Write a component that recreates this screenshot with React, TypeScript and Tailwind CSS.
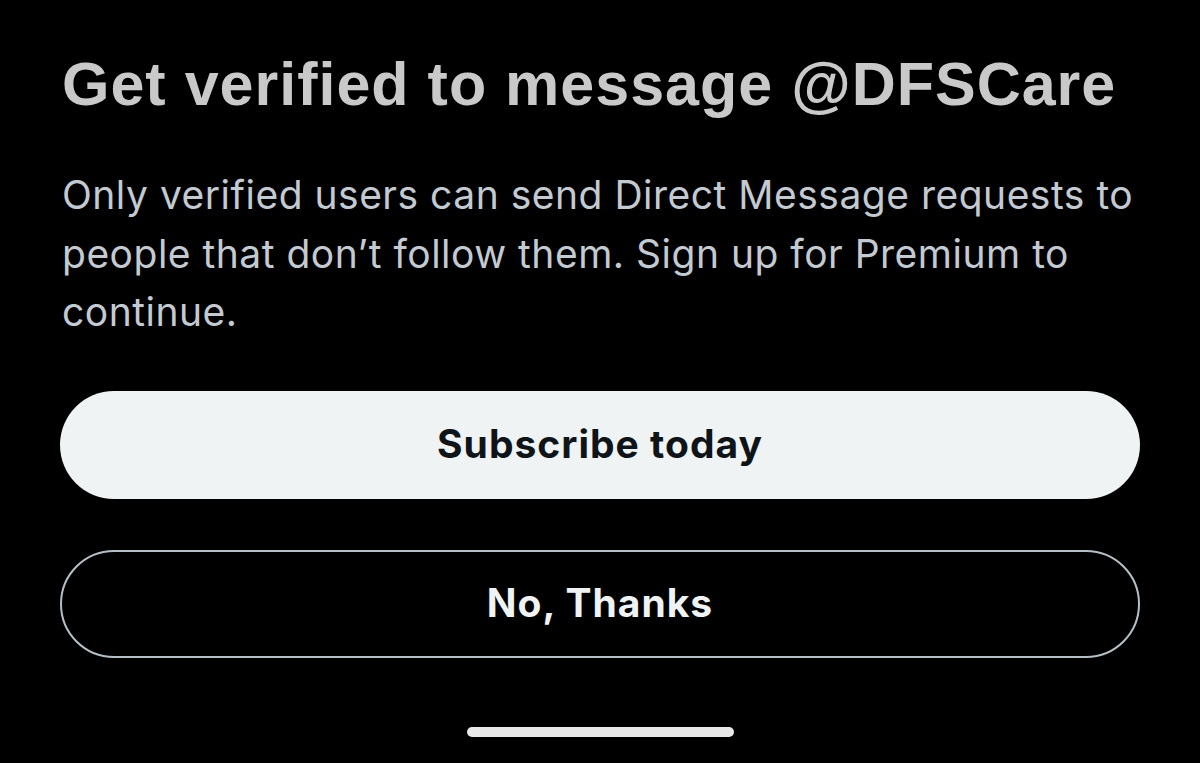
import React from 'react';

export default function App() {
  return (
    <div className="w-[1200px] h-[763px] bg-black overflow-hidden flex flex-col px-[60px]">
      <h1 className="mt-[50px] pl-[2px] text-[61px] leading-[69px] tracking-[1px] font-bold text-[#c9c9c9] font-['Liberation_Sans',sans-serif] whitespace-nowrap">
        Get verified to message @DFSCare
      </h1>

      <p className="mt-[47px] pl-[2px] text-[39px] leading-[58.5px] tracking-[0.5px] text-[#c3cad1] font-['Inter',sans-serif]">
        Only verified users can send Direct Message requests to people that don’t follow them. Sign up for Premium to
        continue.
      </p>

      <div className="mt-[49px] flex flex-col gap-[51px]">
        <button className="h-[108px] w-full rounded-full bg-[#eff3f4] text-[#0f1419] text-[39px] tracking-[1px] font-bold font-['Inter',sans-serif] flex items-center justify-center">
          Subscribe today
        </button>
        <button className="h-[108px] w-full rounded-full border-2 border-[#b4bfc6] text-[#eff3f4] text-[39px] tracking-[1px] font-bold font-['Inter',sans-serif] flex items-center justify-center">
          No, Thanks
        </button>
      </div>

      <div className="mt-[69px] flex justify-center">
        <div className="w-[267px] h-[10px] rounded-full bg-[#e8e8e8]" />
      </div>
    </div>
  );
}
